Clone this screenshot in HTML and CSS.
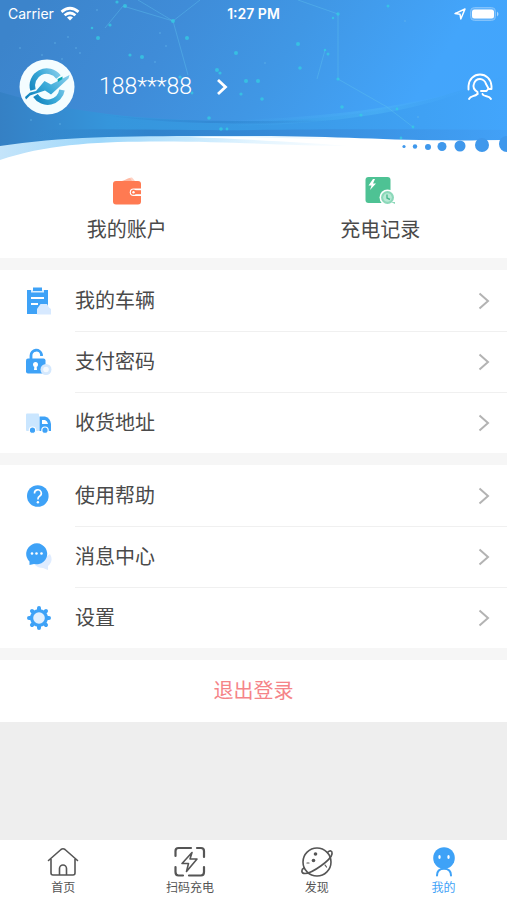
FILE: index.html
```html
<!DOCTYPE html>
<html lang="zh-CN">
<head>
<meta charset="utf-8">
<meta name="viewport" content="width=device-width, initial-scale=1">
<title>我的</title>
<link rel="stylesheet" href="styles.css">
</head>
<body>
<div class="app">
  <header class="hero">
    <svg class="hero-art" viewBox="0 0 507 160" preserveAspectRatio="none" aria-hidden="true">
      <defs>
        <linearGradient id="sky" x1="0" y1="0.3" x2="1" y2="0.5">
          <stop offset="0" stop-color="#3c84cb"/><stop offset="0.3" stop-color="#3f8cd8"/><stop offset="0.55" stop-color="#4097e5"/><stop offset="0.85" stop-color="#43a5fb"/><stop offset="1" stop-color="#42a5fc"/>
        </linearGradient>
        <linearGradient id="swoosh" x1="0" x2="1">
          <stop offset="0" stop-color="#3580c4"/><stop offset="0.22" stop-color="#3596dc"/><stop offset="0.5" stop-color="#3999e4"/><stop offset="1" stop-color="#42a5fc"/>
        </linearGradient>
        <linearGradient id="ribbon" x1="0" x2="1">
          <stop offset="0" stop-color="#2f7abf" stop-opacity="0"/><stop offset="0.25" stop-color="#2f7cc6"/><stop offset="0.5" stop-color="#3585d3"/><stop offset="1" stop-color="#429ff5"/>
        </linearGradient>
        <linearGradient id="shade" x1="0" x2="1">
          <stop offset="0" stop-color="#2f80cd" stop-opacity="0"/><stop offset="0.5" stop-color="#2f80cd" stop-opacity="0.6"/><stop offset="1" stop-color="#2f80cd" stop-opacity="0"/>
        </linearGradient>
        <linearGradient id="edge" x1="0" x2="1">
          <stop offset="0" stop-color="#c4e4fa"/><stop offset="0.2" stop-color="#9ed8fb"/><stop offset="0.5" stop-color="#e2f4ff"/><stop offset="0.7" stop-color="#fff"/>
        </linearGradient>
        <linearGradient id="glow" x1="0" x2="1">
          <stop offset="0" stop-color="#45adf0" stop-opacity="0"/><stop offset="0.6" stop-color="#4db5f6" stop-opacity="0.55"/><stop offset="1" stop-color="#43a6fc" stop-opacity="0.1"/>
        </linearGradient>
      </defs>
      <rect width="507" height="160" fill="url(#sky)"/>
      <path d="M0 92C70 113 150 122 254 121S440 101 507 74V160H0Z" fill="url(#swoosh)"/>
      <path d="M230 120C330 118 410 106 475 87C420 111 340 124 230 126Z" fill="url(#glow)"/>
      <path d="M85 112C130 119 190 123 340 120C270 126 150 125 85 112Z" fill="url(#shade)"/>
      <path d="M35 130C110 128 190 131 254 130S430 129 507 130V145H35Z" fill="url(#ribbon)" opacity="0.75"/>
      <g class="web">
        <path d="M123 6L173 21L188 75M173 21L200 0M138 0L173 21M298 0L338 14V79L387 107L413 127M325 50L317 79M105 28L123 6"/>
      </g>
      <g class="stars">
        <circle cx="173" cy="21" r="2"/><circle cx="187" cy="38" r="2"/><circle cx="130" cy="55" r="1.6"/><circle cx="142" cy="57" r="2"/><circle cx="236" cy="53" r="2"/><circle cx="217" cy="70" r="2"/><circle cx="220" cy="73" r="1.6"/><circle cx="246" cy="81" r="2"/><circle cx="241" cy="94" r="1.6"/><circle cx="209" cy="118" r="1.8"/><circle cx="221" cy="129" r="1.8"/><circle cx="227" cy="129" r="1.4"/><circle cx="180" cy="77" r="1.6"/><circle cx="192" cy="93" r="1.4"/><circle cx="298" cy="44" r="2"/><circle cx="300" cy="68" r="1.8"/><circle cx="258" cy="81" r="2"/><circle cx="262" cy="99" r="1.8"/><circle cx="338" cy="14" r="1.7"/><circle cx="333" cy="18" r="1.2"/><circle cx="325" cy="50" r="1.3"/><circle cx="328" cy="54" r="1.5"/><circle cx="338" cy="79" r="1.6"/><circle cx="342" cy="107" r="1.8"/><circle cx="361" cy="115" r="1.6"/><circle cx="397" cy="109" r="1.4"/><circle cx="413" cy="127" r="1.4"/><circle cx="401" cy="138" r="1.4"/><circle cx="388" cy="6" r="1.5"/><circle cx="125" cy="6" r="2"/><circle cx="117" cy="2" r="1.6"/><circle cx="98" cy="38" r="2"/><circle cx="92" cy="28" r="1.3"/><circle cx="110" cy="25" r="1.6"/>
      </g>
      <g fill="#6bbdec" opacity="0.4">
        <circle cx="55" cy="43" r="1"/><circle cx="68" cy="37" r="1"/><circle cx="76" cy="48" r="1"/><circle cx="42" cy="55" r="1"/><circle cx="62" cy="59" r="1"/><circle cx="80" cy="53" r="1"/><circle cx="20" cy="48" r="1"/><circle cx="97" cy="10" r="1"/><circle cx="160" cy="33" r="1"/><circle cx="166" cy="46" r="1"/><circle cx="155" cy="62" r="1"/><circle cx="31" cy="120" r="1"/><circle cx="60" cy="124" r="1"/><circle cx="265" cy="63" r="1"/><circle cx="418" cy="117" r="1"/><circle cx="405" cy="21" r="1"/>
      </g>
      <path d="M0 146C70 135 150 136 254 136S390 142 507 140V160H0Z" fill="url(#edge)"/>
      <path d="M0 160C45 145 90 142 150 141.500C230 141 290 146 350 146C300 142 240 139 190 137C260 136 330 140 390 141.500Q450 142 507 140V160Z" fill="#fff"/>
      <g fill="#3f98ec">
        <circle cx="404" cy="146.500" r="1.600"/><circle cx="415" cy="146.500" r="2.200"/><circle cx="428" cy="147" r="3"/><circle cx="442" cy="146.500" r="4.500"/><circle cx="460" cy="146" r="5.500"/><circle cx="482" cy="145" r="7"/><circle cx="507" cy="144" r="8"/>
      </g>
    </svg>
    <div class="status">
      <div class="status-left"><span>Carrier</span>
        <svg width="20" height="16" viewBox="0 0 20 16" fill="none" stroke="#fff" stroke-width="2.800"><path d="M1.500 5.800Q10-1.200 18.500 5.800M4.600 9.300Q10 4.600 15.400 9.300"/><path d="M7 11.500Q10 9 13 11.500L10 14.500Z" fill="#fff" stroke="none"/></svg>
      </div>
      <time class="clock">1:27 PM</time>
      <div class="status-right">
        <svg width="12" height="12" viewBox="0 0 12 12" fill="none" stroke="#fff" stroke-width="1.500" stroke-linejoin="round"><path d="M1 5.600L11 1L6.800 11L6 6.200Z"/></svg>
        <svg width="29" height="14" viewBox="0 0 29 14"><rect x="0.500" y="0.500" width="25" height="13" rx="4" fill="#82c2fb" fill-opacity="0.500" stroke="#82c2fb"/><rect x="2" y="2.500" width="22" height="9" rx="2.500" fill="#fff"/><path d="M27 4.500Q30 7 27 9.500Z" fill="#a9d7fd"/></svg>
      </div>
    </div>
    <div class="profile">
      <a class="user" href="#profile">
        <svg class="avatar" viewBox="0 0 56 56" aria-hidden="true">
          <defs><linearGradient id="logo" x1="0" y1="0.800" x2="1" y2="0.200"><stop offset="0" stop-color="#1284bd"/><stop offset="0.500" stop-color="#39a9d8"/><stop offset="1" stop-color="#82cbea"/></linearGradient></defs>
          <circle cx="28" cy="28" r="27.500" fill="#f4fdff"/>
          <path d="M39.500 18A14.500 14.500 0 0 0 14 31M16.500 36.500A14.500 14.500 0 0 0 43 31" fill="none" stroke="url(#logo)" stroke-width="5.500"/>
          <path d="M6 38L11 33.500L17 32L25.500 22L32 25.500L50.500 16L49.500 19.500L32 35.500L26 31.500L17 34.500L11 36.500L7 40.500Z" fill="url(#logo)" stroke="#f4fdff" stroke-width="1.500" paint-order="stroke"/>
          <path d="M38.500 20L43.500 17.500V20L39 23Z" fill="#0aa7b5"/>
        </svg>
        <span class="phone">188***88</span>
        <svg class="go" width="12" height="18" viewBox="0 0 12 18" fill="none" stroke="#fff" stroke-width="2.800"><path d="M2 2L9.500 9L2 16"/></svg>
      </a>
      <button class="service" type="button" aria-label="客服">
        <svg width="26" height="28" viewBox="0 0 26 28" fill="none" stroke="#fff" stroke-width="1.900" stroke-linecap="round" stroke-linejoin="round"><path d="M1.500 16.500V13C2 6 7 1.500 13 1.500S24 6 24.500 13V16H21.500"/><path d="M10.500 21V19C6.500 16.500 6 13 7 10.500C8 7.500 10.500 6 13 6S18.500 8 19 11L21.500 15.500L19.500 18H14"/><path d="M2 26Q3 24 6 23.200T10.500 21M15.500 21Q16 22.500 19.500 23.200T24 26"/></svg>
      </button>
    </div>
  </header>

  <main>
    <nav class="shortcuts">
      <a href="#account">
        <svg width="30" height="30" viewBox="0 0 30 30"><path d="M12 5Q16 1 20 1.500L23 5Z" fill="#ffd3c5"/><path d="M10 5L18 2L20 5Z" fill="#ffb9a3"/><rect x="1" y="5" width="28" height="23.500" rx="3" fill="#ff7a52"/><path d="M30 12.500H21.500A3.700 3.700 0 0 0 21.500 20H30Z" fill="#fff"/><path d="M22 14.200H29V18.200H22Z" fill="#ff7a52"/><circle cx="21.500" cy="16.200" r="2.600" fill="#ff7a52"/><circle cx="21.500" cy="16.200" r="1.200" fill="#fff"/></svg>
        <span>我的账户</span>
      </a>
      <a href="#records">
        <svg width="30" height="30" viewBox="0 0 30 30"><rect x="0.500" y="1" width="25" height="26" rx="3" fill="#4ec294"/><path d="M8 3L3.500 9.500H6.500L5 14L11 7.500H8L10 3Z" fill="#fff"/><circle cx="22.500" cy="21.500" r="8" fill="#fff"/><circle cx="22.500" cy="21.500" r="6.500" fill="#8bd8b9"/><circle cx="22.500" cy="21.500" r="4.300" fill="#b8e9d5"/><path d="M22 18.500V22L25 23.500" fill="none" stroke="#4ab98e" stroke-width="1.400"/><path d="M26 26H30V28Z" fill="#8bd8b9"/></svg>
        <span>充电记录</span>
      </a>
    </nav>

    <ul class="menu">
      <li><a href="#cars">
        <svg class="icon" viewBox="0 0 28 28"><path d="M2 3H23V27H2Z" fill="#3ea2f7"/><path d="M6 3H19V5.500H6Z" fill="#d6ecff"/><path d="M8 0.500H17V4H8Z" fill="#3ea2f7"/><path d="M6 11H19M6 17H13" stroke="#fff" stroke-width="2"/><path d="M13 20.500L15.500 17H22L24 20.500L26 22V27.500H12V22Z" fill="#d7e9ff"/></svg>
        <span>我的车辆</span><svg class="chevron" viewBox="0 0 12 18"><path d="M1.500 1.500L10 9L1.500 16.500"/></svg></a></li>
      <li><a href="#password">
        <svg class="icon" viewBox="0 0 28 28"><path d="M6 12V7.500A5.300 5.300 0 0 1 16.500 6.500V8" fill="none" stroke="#3ea2f7" stroke-width="2.800"/><rect x="1" y="10.500" width="19.500" height="15" rx="2" fill="#3ea2f7"/><circle cx="10.500" cy="16.500" r="2.500" fill="#fff"/><path d="M9.500 17H11.500L12 22H9Z" fill="#fff"/><circle cx="21" cy="21.500" r="5.500" fill="#d4e8fd"/><circle cx="21" cy="21.500" r="2.800" fill="#f3f9ff"/></svg>
        <span>支付密码</span><svg class="chevron" viewBox="0 0 12 18"><path d="M1.500 1.500L10 9L1.500 16.500"/></svg></a></li>
      <li><a href="#address">
        <svg class="icon" viewBox="0 0 28 28"><rect x="1" y="4.500" width="13" height="17.500" rx="1" fill="#cae6ff"/><path d="M14.500 7.500H20Q25.500 9 26 15V22H14.500Z" fill="#3ea2f7"/><path d="M17 11H20Q22.500 12 23 15H17Z" fill="#fff"/><g fill="#3ea2f7" stroke="#fff" stroke-width="1.200"><circle cx="7.500" cy="21.200" r="3.200"/><circle cx="20" cy="21.200" r="3.200"/></g></svg>
        <span>收货地址</span><svg class="chevron" viewBox="0 0 12 18"><path d="M1.500 1.500L10 9L1.500 16.500"/></svg></a></li>
    </ul>

    <ul class="menu">
      <li><a href="#help">
        <svg class="icon" viewBox="0 0 28 28"><circle cx="12.800" cy="14" r="10.800" fill="#3ea2f7"/><path d="M9.500 11.500A3.400 3.400 0 1 1 14.500 14.200Q12.900 15.200 12.900 17.500" fill="none" stroke="#fff" stroke-width="1.600"/><circle cx="12.900" cy="20.300" r="1.200" fill="#fff"/></svg>
        <span>使用帮助</span><svg class="chevron" viewBox="0 0 12 18"><path d="M1.500 1.500L10 9L1.500 16.500"/></svg></a></li>
      <li><a href="#messages">
        <svg class="icon" viewBox="0 0 28 28"><path d="M25 11Q29 18 23 23V27L18 25Q13 25 10 22Z" fill="#dfecff"/><path d="M4.500 22V18.500A10.500 10.500 0 1 1 9 21Z" fill="#3ea2f7"/><g fill="#fff"><circle cx="7" cy="10.500" r="1.300"/><circle cx="11.500" cy="10.500" r="1.300"/><circle cx="16.500" cy="10.500" r="1.300"/></g></svg>
        <span>消息中心</span><svg class="chevron" viewBox="0 0 12 18"><path d="M1.500 1.500L10 9L1.500 16.500"/></svg></a></li>
      <li><a href="#settings">
        <svg class="icon" viewBox="0 0 28 28"><path d="M14 4V24M4 14H24M7 7L21 21M21 7L7 21" stroke="#3ea2f7" stroke-width="4" stroke-linecap="round"/><circle cx="14" cy="14" r="9" fill="#3ea2f7"/><circle cx="14" cy="14" r="5.800" fill="#e1f0ff"/></svg>
        <span>设置</span><svg class="chevron" viewBox="0 0 12 18"><path d="M1.500 1.500L10 9L1.500 16.500"/></svg></a></li>
    </ul>

    <button class="logout" type="button">退出登录</button>
  </main>

  <nav class="tabs">
    <a href="#home">
      <svg width="32" height="32" viewBox="0 0 32 32"><path d="M1.500 14.500L14 3.500Q16 2 18 3.500L30.500 14.500M4 13V27Q4 29 6 29H26Q28 29 28 27V13M12.500 29V22.500A3.500 3.500 0 0 1 19.500 22.500V29"/></svg>
      <span>首页</span></a>
    <a href="#scan">
      <svg width="32" height="32" viewBox="0 0 32 32"><path d="M1.500 10V5Q1.500 2 4.500 2H17M23 2H27Q30 2 30 5V11M1.500 21V26Q1.500 29.500 4.500 29.500H9M15 29.500H27Q30 29.500 30 26V21" stroke-width="2.200"/><path d="M18 6.500L8 17.500H14.500L12.500 25.500L23 13H16L18 6.500"/></svg>
      <span>扫码充电</span></a>
    <a href="#discover">
      <svg width="32" height="32" viewBox="0 0 32 32"><circle cx="16" cy="16" r="14"/><path d="M26.500 6.500C29 4 31.500 4.500 31 8C30 14 11 27.500 4 27.500C0 27.500 0 23.500 3 22"/><path d="M6 17H8M24 19L25.500 21" stroke-width="1.200"/><circle class="dot" cx="14.500" cy="8" r="1.800"/><circle class="dot" cx="12.500" cy="14.500" r="1.800"/></svg>
      <span>发现</span></a>
    <a class="active" href="#me" aria-current="page">
      <svg width="32" height="32" viewBox="0 0 32 32"><circle class="dot" cx="16" cy="12" r="10.800"/><path d="M9 29.500C9 25 12 22.800 16 22.800S23 25 23 29.500" stroke-width="2"/><g fill="#fff" stroke="none"><ellipse cx="11.500" cy="11" rx="1.200" ry="1.900"/><ellipse cx="20.500" cy="11" rx="1.200" ry="1.900"/></g></svg>
      <span>我的</span></a>
  </nav>
</div>
</body>
</html>
```
FILE: styles.css
```css
* { box-sizing: border-box; }

body {
  margin: 0;
  background: #eee;
  color: #4a4a4a;
  font-family: Inter, "Noto Sans CJK SC", sans-serif;
  font-size: 20px;
  line-height: 28px;
}

a { color: inherit; text-decoration: none; }
button { border: 0; padding: 0; background: none; font: inherit; cursor: pointer; }
svg { display: block; flex: none; }

.app { min-height: 100vh; display: flex; flex-direction: column; }
main { flex: 1; }

.hero { position: relative; height: 160px; color: #fff; }
.hero-art { position: absolute; inset: 0; width: 100%; height: 100%; }
.web { fill: none; stroke: #5fc4ee; stroke-width: 1; opacity: 0.4; }
.stars { fill: #35cee3; opacity: 0.75; }

.status {
  position: relative;
  display: grid;
  grid-template-columns: 1fr auto 1fr;
  align-items: center;
  height: 28px;
  padding: 0 8px;
  font-size: 14px;
  line-height: 20px;
}
.status-left, .status-right { display: flex; align-items: center; gap: 6px; }
.status-right { justify-content: flex-end; gap: 4px; }
.clock { font-weight: 600; }

.profile {
  position: relative;
  display: flex;
  align-items: center;
  justify-content: space-between;
  margin-top: 31px;
  padding: 0 14px 0 19px;
}
.user { display: flex; align-items: center; gap: 24px; }
.avatar { width: 56px; height: 56px; }
.phone { font-family: Roboto, sans-serif; font-size: 23px; font-weight: 300; }

.shortcuts {
  display: grid;
  grid-template-columns: 1fr 1fr;
  padding: 16px 0 14px;
  background: #fff;
}
.shortcuts a { display: flex; flex-direction: column; align-items: center; gap: 10px; }

.menu {
  margin: 0;
  padding: 0;
  border-top: 12px solid #f6f6f6;
  background: #fff;
  list-style: none;
}
.menu a { display: flex; align-items: center; height: 61px; padding: 0 17px 0 25px; }
.menu span { flex: 1; }
.menu li + li { background: linear-gradient(#f0f0f0, #f0f0f0) 75px 0 / 100% 1px no-repeat; }
.icon { width: 28px; height: 28px; margin-right: 22px; }
.chevron { width: 12px; height: 18px; fill: none; stroke: #b3b3b3; stroke-width: 2; }

.logout {
  display: block;
  width: 100%;
  height: 74px;
  border-top: 12px solid #f6f6f6;
  background: #fff;
  color: #f58488;
}

.tabs {
  display: grid;
  grid-template-columns: repeat(4, 1fr);
  height: 60px;
  padding-top: 6px;
  background: #fff;
  color: #555;
  font-size: 12px;
  line-height: 20px;
}
.tabs a { display: flex; flex-direction: column; align-items: center; }
.tabs svg { fill: none; stroke: currentColor; stroke-width: 1.6; stroke-linecap: round; stroke-linejoin: round; }
.tabs .dot { fill: currentColor; stroke: none; }
.tabs .active { color: #3ea2f7; }
```
